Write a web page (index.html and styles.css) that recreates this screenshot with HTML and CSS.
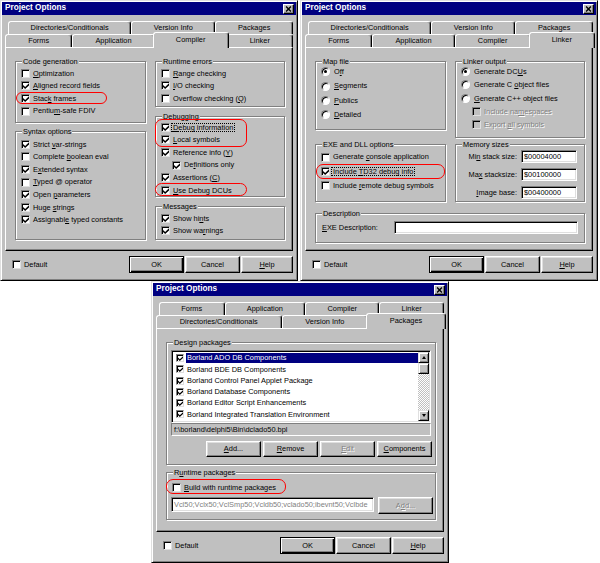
FILE: index.html
```html
<!DOCTYPE html>
<html>
<head>
<meta charset="utf-8">
<title>Project Options</title>
<link rel="stylesheet" href="styles.css">
</head>
<body>
<div class="desk">
  <div class="toprow">
    <!-- Dialog 1: Compiler -->
    <section class="dlg">
      <header class="title"><span>Project Options</span><span class="close"><svg class="xi"><use href="#x"/></svg></span></header>
      <div class="tabs">
        <div class="tabrow back"><span class="tab">Directories/Conditionals</span><span class="tab">Version Info</span><span class="tab">Packages</span></div>
        <div class="tabrow front"><span class="tab">Forms</span><span class="tab">Application</span><span class="tab sel">Compiler</span><span class="tab">Linker</span></div>
      </div>
      <div class="page">
        <div class="cols">
          <div class="col">
            <div class="group g-code"><span class="legend">Code generation</span>
              <div class="opt"><span class="cb"></span><span><u>O</u>ptimization</span></div>
              <div class="opt"><span class="cb"><svg class="ck"><use href="#ck"/></svg></span><span><u>A</u>ligned record fields</span></div>
              <div class="opt mark"><span class="cb"><svg class="ck"><use href="#ck"/></svg></span><span>Stac<u>k</u> frames</span><span class="ring r-stack"></span></div>
              <div class="opt"><span class="cb"></span><span>Pentiu<u>m</u>-safe FDIV</span></div>
            </div>
            <div class="group g-syntax"><span class="legend">Syntax options</span>
              <div class="opt"><span class="cb"><svg class="ck"><use href="#ck"/></svg></span><span>Strict <u>v</u>ar-strings</span></div>
              <div class="opt"><span class="cb"></span><span>Complete <u>b</u>oolean eval</span></div>
              <div class="opt"><span class="cb"><svg class="ck"><use href="#ck"/></svg></span><span>E<u>x</u>tended syntax</span></div>
              <div class="opt"><span class="cb"></span><span><u>T</u>yped @ operator</span></div>
              <div class="opt"><span class="cb"><svg class="ck"><use href="#ck"/></svg></span><span>Open <u>p</u>arameters</span></div>
              <div class="opt"><span class="cb"><svg class="ck"><use href="#ck"/></svg></span><span>Huge <u>s</u>trings</span></div>
              <div class="opt"><span class="cb"><svg class="ck"><use href="#ck"/></svg></span><span>Assignabl<u>e</u> typed constants</span></div>
            </div>
          </div>
          <div class="col">
            <div class="group g-rt"><span class="legend">Runtime errors</span>
              <div class="opt"><span class="cb"></span><span><u>R</u>ange checking</span></div>
              <div class="opt"><span class="cb"><svg class="ck"><use href="#ck"/></svg></span><span><u>I</u>/O checking</span></div>
              <div class="opt"><span class="cb"></span><span>Overflow checking (<u>Q</u>)</span></div>
            </div>
            <div class="group g-dbg"><span class="legend">Debugging</span>
              <div class="mark">
                <div class="opt"><span class="cb"><svg class="ck"><use href="#ck"/></svg></span><span class="focus"><u>D</u>ebug information</span></div>
                <div class="opt"><span class="cb"><svg class="ck"><use href="#ck"/></svg></span><span><u>L</u>ocal symbols</span></div>
                <span class="ring r-dbg"></span>
              </div>
              <div class="opt"><span class="cb"><svg class="ck"><use href="#ck"/></svg></span><span>Reference info (<u>Y</u>)</span></div>
              <div class="opt ind"><span class="cb"><svg class="ck"><use href="#ck"/></svg></span><span>De<u>f</u>initions only</span></div>
              <div class="opt"><span class="cb"><svg class="ck"><use href="#ck"/></svg></span><span>Assertions (<u>C</u>)</span></div>
              <div class="opt mark"><span class="cb"><svg class="ck"><use href="#ck"/></svg></span><span><u>U</u>se Debug DCUs</span><span class="ring r-dcu"></span></div>
            </div>
            <div class="group g-msg"><span class="legend">Messages</span>
              <div class="opt"><span class="cb"><svg class="ck"><use href="#ck"/></svg></span><span>Show hi<u>n</u>ts</span></div>
              <div class="opt"><span class="cb"><svg class="ck"><use href="#ck"/></svg></span><span>Show wa<u>r</u>nings</span></div>
            </div>
          </div>
        </div>
      </div>
      <footer class="foot">
        <div class="opt"><span class="cb"></span><span>Default</span></div>
        <div class="btns"><button class="btn def">OK</button><button class="btn">Cancel</button><button class="btn help"><span><u>H</u>elp</span></button></div>
      </footer>
    </section>

    <!-- Dialog 2: Linker -->
    <section class="dlg">
      <header class="title"><span>Project Options</span><span class="close"><svg class="xi"><use href="#x"/></svg></span></header>
      <div class="tabs">
        <div class="tabrow back"><span class="tab">Directories/Conditionals</span><span class="tab">Version Info</span><span class="tab">Packages</span></div>
        <div class="tabrow front"><span class="tab">Forms</span><span class="tab">Application</span><span class="tab">Compiler</span><span class="tab sel">Linker</span></div>
      </div>
      <div class="page">
        <div class="cols">
          <div class="col">
            <div class="group g-map"><span class="legend">Map file</span>
              <div class="opt r14"><span class="rb on"></span><span>O<u>f</u>f</span></div>
              <div class="opt r14"><span class="rb"></span><span><u>S</u>egments</span></div>
              <div class="opt r14"><span class="rb"></span><span><u>P</u>ublics</span></div>
              <div class="opt r14"><span class="rb"></span><span><u>D</u>etailed</span></div>
            </div>
            <div class="group g-exe"><span class="legend">EXE and DLL options</span>
              <div class="opt r14b"><span class="cb"></span><span>Generate <u>c</u>onsole application</span></div>
              <div class="opt r14b mark"><span class="cb"><svg class="ck"><use href="#ck"/></svg></span><span class="focus">Include <u>T</u>D32 debug info</span><span class="ring r-td32"></span></div>
              <div class="opt r14b"><span class="cb"></span><span>Include <u>r</u>emote debug symbols</span></div>
            </div>
          </div>
          <div class="col">
            <div class="group g-lout"><span class="legend">Linker output</span>
              <div class="opt r13"><span class="rb on"></span><span>Generate DC<u>U</u>s</span></div>
              <div class="opt r13"><span class="rb"></span><span>Generate C <u>o</u>bject files</span></div>
              <div class="opt r13"><span class="rb"></span><span><u>G</u>enerate C++ object files</span></div>
              <div class="opt r13 ind dis"><span class="cb"></span><span>Include na<u>m</u>espaces</span></div>
              <div class="opt r13 ind dis"><span class="cb"></span><span>Export <u>a</u>ll symbols</span></div>
            </div>
            <div class="group g-mem"><span class="legend">Memory sizes</span>
              <div class="memrow"><span>Mi<u>n</u> stack size:</span><span class="field">$00004000</span></div>
              <div class="memrow"><span>Ma<u>x</u> stacksize:</span><span class="field">$00100000</span></div>
              <div class="memrow"><span><u>I</u>mage base:</span><span class="field">$00400000</span></div>
            </div>
          </div>
        </div>
        <div class="group g-desc"><span class="legend">Description</span>
          <div class="descrow"><span class="dlabel"><u>E</u>XE Description:</span><span class="field grow"></span></div>
        </div>
      </div>
      <footer class="foot">
        <div class="opt"><span class="cb"></span><span>Default</span></div>
        <div class="btns"><button class="btn def">OK</button><button class="btn">Cancel</button><button class="btn help"><span><u>H</u>elp</span></button></div>
      </footer>
    </section>
  </div>

  <div class="botrow">
    <!-- Dialog 3: Packages -->
    <section class="dlg d3">
      <header class="title"><span>Project Options</span><span class="close"><svg class="xi"><use href="#x"/></svg></span></header>
      <div class="tabs">
        <div class="tabrow back"><span class="tab">Forms</span><span class="tab">Application</span><span class="tab">Compiler</span><span class="tab">Linker</span></div>
        <div class="tabrow front"><span class="tab">Directories/Conditionals</span><span class="tab">Version Info</span><span class="tab sel">Packages</span></div>
      </div>
      <div class="page">
        <div class="group g-design"><span class="legend">Design packages</span>
          <div class="list">
            <div class="items">
              <div class="li hl"><span class="cb sm"><svg class="ck"><use href="#ck"/></svg></span><span class="tx">Borland ADO DB Components</span></div>
              <div class="li"><span class="cb sm"><svg class="ck"><use href="#ck"/></svg></span><span class="tx">Borland BDE DB Components</span></div>
              <div class="li"><span class="cb sm"><svg class="ck"><use href="#ck"/></svg></span><span class="tx">Borland Control Panel Applet Package</span></div>
              <div class="li"><span class="cb sm"><svg class="ck"><use href="#ck"/></svg></span><span class="tx">Borland Database Components</span></div>
              <div class="li"><span class="cb sm"><svg class="ck"><use href="#ck"/></svg></span><span class="tx">Borland Editor Script Enhancements</span></div>
              <div class="li"><span class="cb sm"><svg class="ck"><use href="#ck"/></svg></span><span class="tx">Borland Integrated Translation Environment</span></div>
            </div>
            <div class="sbar">
              <span class="sbtn"><span class="arr up"></span></span>
              <span class="thumb"></span>
              <span class="track"></span>
              <span class="sbtn"><span class="arr down"></span></span>
            </div>
          </div>
          <div class="path">f:\borland\delphi5\Bin\dclado50.bpl</div>
          <div class="btnrow">
            <button class="btn b16"><span><u>A</u>dd...</span></button>
            <button class="btn b16"><span><u>R</u>emove</span></button>
            <button class="btn b16 disabled"><span><u>E</u>dit</span></button>
            <button class="btn b16"><span><u>C</u>omponents</span></button>
          </div>
        </div>
        <div class="group g-runtime"><span class="legend">R<u>u</u>ntime packages</span>
          <div class="opt r13b mark"><span class="cb"></span><span><u>B</u>uild with runtime packages</span><span class="ring r-build"></span></div>
          <div class="rtrow">
            <span class="field rtfield">Vcl50;Vclx50;VclSmp50;Vcldb50;vclado50;ibevnt50;Vclbde</span>
            <button class="btn rtadd disabled"><span>A<u>d</u>d...</span></button>
          </div>
        </div>
      </div>
      <footer class="foot">
        <div class="opt"><span class="cb"></span><span>Default</span></div>
        <div class="btns"><button class="btn def">OK</button><button class="btn">Cancel</button><button class="btn help"><span><u>H</u>elp</span></button></div>
      </footer>
    </section>
  </div>
</div>

<svg class="defs" aria-hidden="true">
  <defs>
    <symbol id="ck" viewBox="0 0 7 7"><polygon points="0,2.2 2.5,4.6 7,0.2 7,2.8 2.5,7 0,4.7"/></symbol>
    <symbol id="x" viewBox="0 0 8 7"><path d="M1.2 0.6 L6.8 6.4 M6.8 0.6 L1.2 6.4" fill="none" stroke="#000" stroke-width="1.6"/></symbol>
  </defs>
</svg>
</body>
</html>
```

FILE: styles.css
```css
* { box-sizing: border-box; }
html, body { margin: 0; padding: 0; }
body {
  width: 600px;
  height: 563px;
  overflow: hidden;
  background: #fff;
  font-family: "Liberation Sans", Arial, sans-serif;
  font-size: 7.4px;
  color: #000;
  line-height: 1;
}
u { text-decoration-thickness: 1px; text-underline-offset: 1px; }

.desk { display: flex; flex-direction: column; }
.toprow { display: flex; gap: 2px; }
.botrow { display: flex; padding-left: 151px; }

.dlg {
  width: 298px;
  height: 281px;
  background: #c0c0c0;
  border: 1px solid;
  border-color: #dfdfdf #000 #000 #dfdfdf;
  box-shadow: inset 1px 1px #fff, inset -1px -1px #808080;
  padding: 1px;
  display: flex;
  flex-direction: column;
}
.d3 { height: 282px; }

.title {
  flex: none;
  height: 13px;
  background: #000080;
  color: #fff;
  font-weight: bold;
  font-size: 8.2px;
  display: flex;
  align-items: center;
  justify-content: space-between;
  padding-left: 3px;
}
.close {
  width: 11px;
  height: 10px;
  margin-right: 2px;
  background: #c0c0c0;
  border: 1px solid;
  border-color: #fff #000 #000 #fff;
  box-shadow: inset -1px -1px #808080;
  display: flex;
  align-items: center;
  justify-content: center;
}
.xi { width: 7px; height: 6px; display: block; }

/* tabs */
.tabs { flex: none; margin-top: 6px; }
.tabrow { display: flex; align-items: flex-start; height: 13px; }
.tabrow.back { margin-left: 6px; width: 285px; }
.tabrow.front { margin-left: 3px; width: 288px; }
.tab {
  flex: 1 1 auto;
  height: 13px;
  display: flex;
  align-items: center;
  justify-content: center;
  white-space: nowrap;
  background: #c0c0c0;
  border: 1px solid;
  border-bottom: 0;
  border-color: #fff #000 transparent #fff;
  border-radius: 3px 3px 0 0;
  box-shadow: inset -1px 0 #808080;
}
.tab.sel {
  height: 16px;
  margin: -2px -2px -1px;
  position: relative;
  z-index: 1;
  padding-bottom: 2px;
}

/* page */
.page {
  flex: none;
  margin-left: 3px;
  width: 288px;
  height: 204px;
  border: 1px solid;
  border-color: #fff #000 #000 #fff;
  box-shadow: inset -1px -1px #808080;
  padding: 13px 0 0 9px;
}
.cols { display: flex; gap: 9px; width: 270px; }
.col { display: flex; flex-direction: column; }
.col:first-child { width: 131px; }
.col:last-child { width: 130px; }

.group {
  position: relative;
  border: 1px solid #808080;
  box-shadow: inset 1px 1px #fff, 1px 1px #fff;
  padding: 5px 0 0 5px;
}
.legend {
  position: absolute;
  top: -5px;
  left: 6px;
  padding: 0 1px;
  background: #c0c0c0;
  line-height: 9px;
  white-space: nowrap;
}

.g-code { height: 62px; }
.g-syntax { height: 109px; margin-top: 8px; padding-top: 6px; }
.g-rt { height: 46px; }
.g-dbg { height: 81px; margin-top: 9px; padding-top: 4px; }
.g-msg { height: 34px; margin-top: 9px; }

.g-map { height: 69px; padding-top: 2.5px; }
.g-exe { height: 58px; margin-top: 14px; padding-top: 5px; }
.g-lout { height: 77px; padding-top: 3px; }
.g-mem { height: 58px; margin-top: 6px; padding-top: 5px; }
.g-desc { width: 270px; height: 30px; margin-top: 11px; padding-top: 7px; }

.g-design { width: 270px; height: 123px; padding: 7px 4px 0 4px; }
.g-runtime { width: 270px; height: 48px; margin-top: 7px; padding-top: 8px; }

/* options */
.opt { display: flex; align-items: center; height: 12.6px; white-space: nowrap; }
.opt.r14 { height: 14.4px; }
.opt.r14b { height: 14.2px; }
.opt.r13 { height: 13.3px; }
.opt.r13b { height: 13px; }
.opt.ind { margin-left: 11px; }
.opt.dis { color: #808080; text-shadow: 1px 1px #fff; }
.opt.dis .cb { background: #c0c0c0; }

.cb {
  flex: none;
  width: 9px;
  height: 9px;
  margin-right: 3px;
  background: #fff;
  border: 1px solid;
  border-color: #808080 #dfdfdf #dfdfdf #808080;
  box-shadow: inset 1px 1px #000;
  display: flex;
  align-items: center;
  justify-content: center;
}
.ck { width: 6px; height: 6px; display: block; fill: #000; margin: 1px 0 0 1px; }
.cb.sm { width: 8px; height: 8px; margin: 0 2px 0 3px; }
.cb.sm .ck { width: 5px; height: 5px; }

.rb {
  flex: none;
  width: 9px;
  height: 9px;
  margin-right: 4px;
  border-radius: 50%;
  background: #fff;
  border: 1px solid;
  border-color: #808080 #fff #fff #808080;
  box-shadow: inset 1px 1px #000;
  display: flex;
  align-items: center;
  justify-content: center;
}
.rb.on::after {
  content: "";
  width: 3px;
  height: 3px;
  border-radius: 50%;
  background: #000;
}

.focus { outline: 1px dotted #000; outline-offset: 0; padding: 0 1px; margin-left: -1px; }

/* red annotation rings */
.mark { position: relative; }
.ring {
  position: absolute;
  border: 1.5px solid #f00;
  border-radius: 7px;
  pointer-events: none;
}
.r-stack { left: -5px; top: 0; width: 91px; height: 12px; }
.r-dbg { left: -6px; top: -1.7px; width: 92px; height: 27.4px; }
.r-dcu { left: -6px; top: -1.3px; width: 92px; height: 13.3px; }
.r-td32 { left: -5px; top: -0.4px; width: 129px; height: 15.3px; }
.r-build { left: -6px; top: -1.7px; width: 120px; height: 15px; }

/* fields */
.field {
  height: 13px;
  background: #fff;
  border: 1px solid;
  border-color: #808080 #fff #fff #808080;
  box-shadow: inset 1px 1px #000, inset -1px -1px #dfdfdf;
  padding-left: 2px;
  display: flex;
  align-items: center;
  white-space: nowrap;
  overflow: hidden;
}
.memrow {
  display: flex;
  align-items: center;
  justify-content: flex-end;
  gap: 4px;
  height: 13px;
  margin-bottom: 5px;
  padding-right: 7px;
  white-space: nowrap;
}
.memrow .field { width: 56px; }
.descrow { display: flex; align-items: center; padding-right: 6px; }
.dlabel { width: 73px; padding-left: 1px; white-space: nowrap; }
.field.grow { flex: 1; }

/* list */
.list {
  height: 73px;
  background: #fff;
  border: 1px solid;
  border-color: #808080 #fff #fff #808080;
  box-shadow: inset 1px 1px #000, inset -1px -1px #dfdfdf;
  padding: 1px;
  display: flex;
}
.items { flex: 1; padding-top: 0.3px; }
.li { display: flex; align-items: center; height: 11.3px; white-space: nowrap; }
.li .tx { flex: 1; height: 10px; display: flex; align-items: center; padding-left: 1px; }
.li.hl .tx { background: #000080; color: #fff; }
.sbar { width: 11px; display: flex; flex-direction: column; }
.sbtn, .thumb {
  flex: none;
  height: 11px;
  background: #c0c0c0;
  border: 1px solid;
  border-color: #dfdfdf #000 #000 #dfdfdf;
  box-shadow: inset 1px 1px #fff, inset -1px -1px #808080;
  display: flex;
  align-items: center;
  justify-content: center;
}
.track {
  flex: 1;
  background: repeating-conic-gradient(#c0c0c0 0 25%, #fff 0 50%) 0 0 / 2px 2px;
}
.arr { width: 0; height: 0; border-left: 2.5px solid transparent; border-right: 2.5px solid transparent; }
.arr.up { border-bottom: 3px solid #000; }
.arr.down { border-top: 3px solid #000; }

.path {
  height: 13px;
  border: 1px solid;
  border-color: #808080 #fff #fff #808080;
  padding-left: 2px;
  display: flex;
  align-items: center;
  white-space: nowrap;
}
.btnrow { display: flex; gap: 2px; margin: 5px 0 0 35px; }

.rtrow { display: flex; gap: 4px; margin: 3px 0 0 -1px; }
.rtfield { width: 203px; height: 15px; color: #808080; }
.rtadd { width: 52px; height: 15px; }

/* buttons */
.btn {
  flex: none;
  width: 55px;
  height: 17px;
  padding: 0;
  margin: 0;
  font: inherit;
  color: #000;
  background: #c0c0c0;
  border: 1px solid;
  border-color: #fff #000 #000 #fff;
  box-shadow: inset -1px -1px #808080, inset 1px 1px #dfdfdf;
  display: flex;
  align-items: center;
  justify-content: center;
  white-space: nowrap;
}
.btn.def {
  border-color: #000;
  box-shadow: inset 1px 1px #fff, inset -1px -1px #000, inset -2px -2px #808080;
}
.btn.help { width: 52px; }
.btn.b16 { height: 16px; }
.btn.disabled { color: #808080; text-shadow: 1px 1px #fff; }

.foot {
  flex: none;
  margin-top: 5px;
  height: 17px;
  display: flex;
  align-items: center;
  padding: 0 3px 0 10px;
}
.btns { margin-left: auto; display: flex; gap: 1px; }

.defs { position: absolute; width: 0; height: 0; overflow: hidden; }
```
